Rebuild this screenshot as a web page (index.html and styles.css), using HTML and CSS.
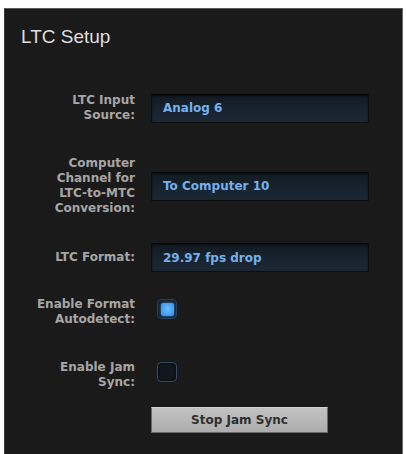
FILE: index.html
```html
<!DOCTYPE html>
<html>
<head>
<meta charset="utf-8">
<link rel="stylesheet" href="styles.css">
</head>
<body>
<div class="panel">
  <h1 class="title">LTC Setup</h1>
  <div class="row row1">
    <div class="label">LTC Input<br>Source:</div>
    <div class="field">Analog 6</div>
  </div>
  <div class="row row2">
    <div class="label">Computer<br>Channel for<br>LTC-to-MTC<br>Conversion:</div>
    <div class="field">To Computer 10</div>
  </div>
  <div class="row row3">
    <div class="label">LTC Format:</div>
    <div class="field">29.97 fps drop</div>
  </div>
  <div class="row row4 top">
    <div class="label">Enable Format<br>Autodetect:</div>
    <div class="check on"><span class="dot"></span></div>
  </div>
  <div class="row row5 top">
    <div class="label">Enable Jam<br>Sync:</div>
    <div class="check off"></div>
  </div>
  <div class="row row6">
    <div class="label"></div>
    <div class="button">Stop Jam Sync</div>
  </div>
</div>
</body>
</html>
```

FILE: styles.css
```css
html, body {
  margin: 0;
  padding: 0;
  background: #ffffff;
}
body {
  height: 454px;
  overflow: hidden;
}
.panel {
  margin: 8px 0 0 4px;
  width: 399px;
  height: 460px;
  box-sizing: border-box;
  background: #1b1a1a;
  border-top: 1px solid #5a5a5a;
  border-left: 1px solid #3a3a3a;
  border-right: 1px solid #6a6a6a;
  padding-top: 17px;
  display: flex;
  flex-direction: column;
  font-family: "DejaVu Sans", sans-serif;
}
.title {
  margin: 0 0 0 16px;
  font-family: "Liberation Sans", Arial, sans-serif;
  font-size: 19px;
  line-height: 22px;
  font-weight: normal;
  color: #dedede;
}
.row {
  display: flex;
  align-items: center;
  gap: 16px;
}
.row.top {
  align-items: flex-start;
}
.row1 { margin-top: 45px; }
.row2 { margin-top: 33px; }
.row3 { margin-top: 27px; }
.row4 { margin-top: 25px; }
.row5 { margin-top: 33px; }
.row6 { margin-top: 17px; }
.label {
  width: 130px;
  flex: none;
  text-align: right;
  font-size: 12px;
  line-height: 15px;
  font-weight: bold;
  color: #a6a6a6;
}
.field {
  width: 218px;
  height: 29px;
  box-sizing: border-box;
  border: 1px solid #0b0d0f;
  border-top-color: #050607;
  background: linear-gradient(#111a22, #182430 60%, #1a2834);
  box-shadow: inset 0 1px 2px rgba(0,0,0,0.6);
  padding-left: 11px;
  display: flex;
  align-items: center;
  font-size: 12px;
  font-weight: bold;
  color: #74b0ec;
}
.check {
  width: 20px;
  height: 20px;
  box-sizing: border-box;
  margin-top: 2px;
  margin-left: 6px;
  border-radius: 4px;
  display: flex;
  align-items: center;
  justify-content: center;
}
.check.on {
  border: 1px solid #24405c;
  background: #14212d;
}
.check.on .dot {
  width: 13px;
  height: 13px;
  border-radius: 2px;
  background: radial-gradient(circle at 50% 45%, #6cc0ff, #3f9cf4 70%, #3a8ee0);
  box-shadow: 0 0 3px rgba(80,160,255,0.7);
}
.check.off {
  border: 1px solid #2f4b66;
  background: #11171d;
  box-shadow: inset 0 0 0 2px #0c1116;
}
.button {
  width: 177px;
  height: 26px;
  box-sizing: border-box;
  border: 1px solid #6a6a6a;
  border-top-color: #d0d0d0;
  background: linear-gradient(#c2c2c2, #adadad);
  display: flex;
  align-items: center;
  justify-content: center;
  font-size: 12px;
  font-weight: bold;
  color: #2e2e2e;
}
```
